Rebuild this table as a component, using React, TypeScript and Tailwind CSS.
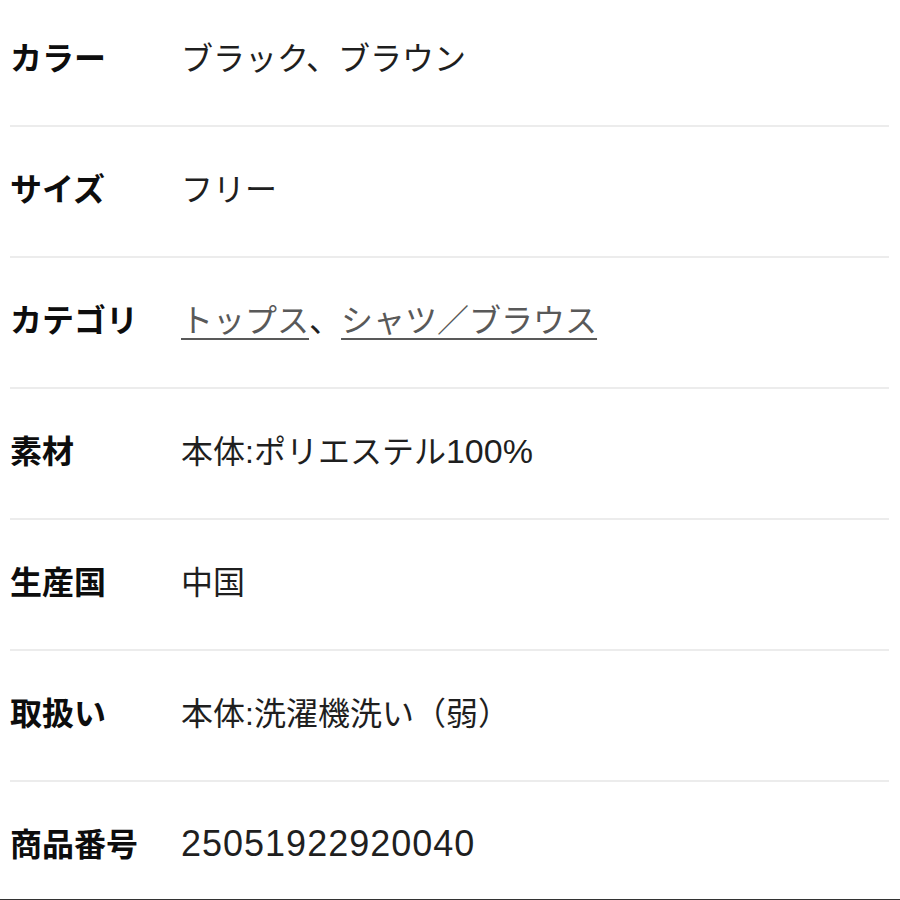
import React from 'react';

type Spec = { label: string; value: React.ReactNode };

const linkCls = 'text-[#595959] underline decoration-2 underline-offset-[6px] decoration-[#595959]';

const SPECS: Spec[] = [
    { label: 'カラー', value: 'ブラック、ブラウン' },
    { label: 'サイズ', value: 'フリー' },
    {
        label: 'カテゴリ',
        value: (
            <>
                <a className={linkCls}>トップス</a>、<a className={linkCls}>シャツ／ブラウス</a>
            </>
        ),
    },
    { label: '素材', value: <>本体:ポリエステル<span className="text-[34px] leading-none">100%</span></> },
    { label: '生産国', value: '中国' },
    { label: '取扱い', value: '本体:洗濯機洗い（弱）' },
    { label: '商品番号', value: <span className="text-[36px] leading-none tracking-[1px]">25051922920040</span> },
];

const App: React.FC = () => {
    return (
        <div
            className="w-[900px] h-[900px] bg-white overflow-hidden border-b border-[#333] box-border"
            style={{ fontFamily: '"Liberation Sans", "Noto Sans CJK JP", sans-serif' }}
        >
            <div className="pl-[10px] pr-[11px]">
                {SPECS.map((spec, i) => (
                    <div
                        key={spec.label}
                        className={`flex items-center h-[40px] box-content leading-[40px] text-[32px] pb-[46px] ${i === 0 ? 'pt-[39px]' : 'pt-[43px]'} ${i < SPECS.length - 1 ? 'border-b-2 border-[#ececec]' : ''}`}
                    >
                        <div className="w-[171px] shrink-0 font-bold text-[#0d0d0d]">{spec.label}</div>
                        <div className="text-[#1f1f1f]">{spec.value}</div>
                    </div>
                ))}
            </div>
        </div>
    );
};

export default App;
